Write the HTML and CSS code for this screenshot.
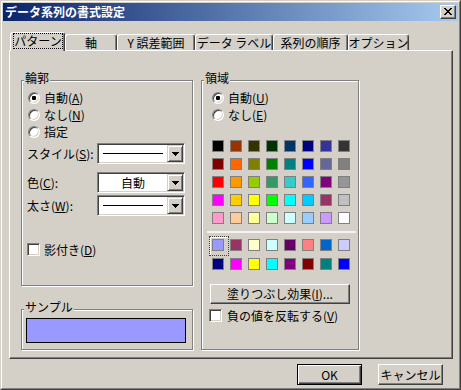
FILE: index.html
```html
<!DOCTYPE html>
<html lang="ja">
<head>
<meta charset="utf-8">
<title>データ系列の書式設定</title>
<link rel="stylesheet" href="styles.css">
</head>
<body>
<div class="window">
  <div class="frame">
    <div class="titlebar">
      <span class="title">データ系列の書式設定</span>
      <div class="close">
        <svg width="8" height="7" viewBox="0 0 8 7" shape-rendering="crispEdges"><path fill="#000" d="M0 0h2v1H0zM6 0h2v1H6zM1 1h2v1H1zM5 1h2v1H5zM2 2h4v1H2zM3 3h2v1H3zM2 4h4v1H2zM1 5h2v1H1zM5 5h2v1H5zM0 6h2v1H0zM6 6h2v1H6z"/></svg>
      </div>
    </div>
    <div class="body">
      <div class="tabs">
        <div class="tab active t1"><span class="focus">パターン</span></div>
        <div class="tab t2">軸</div>
        <div class="tab t3">Y 誤差範囲</div>
        <div class="tab t4">データ ラベル</div>
        <div class="tab t5">系列の順序</div>
        <div class="tab t6">オプション</div>
      </div>
      <div class="panel">
        <div class="col-left">
          <div class="group g-outline">
            <span class="legend">輪郭</span>
            <div class="radio-row"><span class="radio checked"></span><span>自動(<u>A</u>)</span></div>
            <div class="radio-row"><span class="radio"></span><span>なし(<u>N</u>)</span></div>
            <div class="radio-row"><span class="radio"></span><span>指定</span></div>
            <div class="field-row fr1">
              <span class="field-label">スタイル(<u>S</u>):</span>
              <div class="combo">
                <div class="combo-field"><span class="line"></span></div>
                <div class="combo-btn"><svg width="7" height="4" viewBox="0 0 7 4" shape-rendering="crispEdges"><path fill="#000" d="M0 0h7v1H0zM1 1h5v1H1zM2 2h3v1H2zM3 3h1v1H3z"/></svg></div>
              </div>
            </div>
            <div class="field-row fr2">
              <span class="field-label">色(<u>C</u>):</span>
              <div class="combo">
                <div class="combo-field">自動</div>
                <div class="combo-btn"><svg width="7" height="4" viewBox="0 0 7 4" shape-rendering="crispEdges"><path fill="#000" d="M0 0h7v1H0zM1 1h5v1H1zM2 2h3v1H2zM3 3h1v1H3z"/></svg></div>
              </div>
            </div>
            <div class="field-row fr3">
              <span class="field-label">太さ(<u>W</u>):</span>
              <div class="combo">
                <div class="combo-field"><span class="line"></span></div>
                <div class="combo-btn"><svg width="7" height="4" viewBox="0 0 7 4" shape-rendering="crispEdges"><path fill="#000" d="M0 0h7v1H0zM1 1h5v1H1zM2 2h3v1H2zM3 3h1v1H3z"/></svg></div>
              </div>
            </div>
            <div class="check-row cr-shadow"><span class="check"></span><span>影付き(<u>D</u>)</span></div>
          </div>
          <div class="group g-sample">
            <span class="legend">サンプル</span>
            <div class="sample-fill"></div>
          </div>
        </div>
        <div class="group g-area">
          <span class="legend">領域</span>
          <div class="radio-row"><span class="radio checked"></span><span>自動(<u>U</u>)</span></div>
          <div class="radio-row"><span class="radio"></span><span>なし(<u>E</u>)</span></div>
          <div class="palette">
            <span class="sw" style="background:#000000"></span>
            <span class="sw" style="background:#993300"></span>
            <span class="sw" style="background:#333300"></span>
            <span class="sw" style="background:#003300"></span>
            <span class="sw" style="background:#003366"></span>
            <span class="sw" style="background:#000080"></span>
            <span class="sw" style="background:#333399"></span>
            <span class="sw" style="background:#333333"></span>
            <span class="sw" style="background:#800000"></span>
            <span class="sw" style="background:#ff6600"></span>
            <span class="sw" style="background:#808000"></span>
            <span class="sw" style="background:#008000"></span>
            <span class="sw" style="background:#008080"></span>
            <span class="sw" style="background:#0000ff"></span>
            <span class="sw" style="background:#666699"></span>
            <span class="sw" style="background:#808080"></span>
            <span class="sw" style="background:#ff0000"></span>
            <span class="sw" style="background:#ff9900"></span>
            <span class="sw" style="background:#99cc00"></span>
            <span class="sw" style="background:#339966"></span>
            <span class="sw" style="background:#33cccc"></span>
            <span class="sw" style="background:#3366ff"></span>
            <span class="sw" style="background:#800080"></span>
            <span class="sw" style="background:#969696"></span>
            <span class="sw" style="background:#ff00ff"></span>
            <span class="sw" style="background:#ffcc00"></span>
            <span class="sw" style="background:#ffff00"></span>
            <span class="sw" style="background:#00ff00"></span>
            <span class="sw" style="background:#00ffff"></span>
            <span class="sw" style="background:#00ccff"></span>
            <span class="sw" style="background:#993366"></span>
            <span class="sw" style="background:#c0c0c0"></span>
            <span class="sw" style="background:#ff99cc"></span>
            <span class="sw" style="background:#ffcc99"></span>
            <span class="sw" style="background:#ffff99"></span>
            <span class="sw" style="background:#ccffcc"></span>
            <span class="sw" style="background:#ccffff"></span>
            <span class="sw" style="background:#99ccff"></span>
            <span class="sw" style="background:#cc99ff"></span>
            <span class="sw" style="background:#ffffff"></span>
          </div>
          <div class="sep"></div>
          <div class="palette palette2">
            <span class="sw sel" style="background:#9999ff"></span>
            <span class="sw" style="background:#993366"></span>
            <span class="sw" style="background:#ffffcc"></span>
            <span class="sw" style="background:#ccffff"></span>
            <span class="sw" style="background:#660066"></span>
            <span class="sw" style="background:#ff8080"></span>
            <span class="sw" style="background:#0066cc"></span>
            <span class="sw" style="background:#ccccff"></span>
            <span class="sw" style="background:#000080"></span>
            <span class="sw" style="background:#ff00ff"></span>
            <span class="sw" style="background:#ffff00"></span>
            <span class="sw" style="background:#00ffff"></span>
            <span class="sw" style="background:#800080"></span>
            <span class="sw" style="background:#800000"></span>
            <span class="sw" style="background:#008080"></span>
            <span class="sw" style="background:#0000ff"></span>
          </div>
          <div class="btn fill-btn">塗りつぶし効果(<u>I</u>)...</div>
          <div class="check-row cr-invert"><span class="check"></span><span>負の値を反転する(<u>V</u>)</span></div>
        </div>
      </div>
      <div class="buttons">
        <div class="btn default">OK</div>
        <div class="btn">キャンセル</div>
      </div>
    </div>
  </div>
</div>
</body>
</html>
```
FILE: styles.css
```css
* { box-sizing: border-box; }
html, body { margin: 0; padding: 0; }
body {
  background: #d4d0c8;
  font-family: "Noto Sans CJK JP", "Noto Sans", sans-serif;
  font-size: 12px;
  color: #000;
}
u { text-underline-offset: 1px; }

.window {
  width: 461px;
  height: 390px;
  border: 1px solid;
  border-color: #d4d0c8 #404040 #404040 #d4d0c8;
  background: #d4d0c8;
}
.frame {
  height: 100%;
  border: 1px solid;
  border-color: #fff #808080 #808080 #fff;
  padding: 1px;
  display: flex;
  flex-direction: column;
}
.titlebar {
  flex: none;
  height: 18px;
  display: flex;
  align-items: center;
  justify-content: space-between;
  padding: 0 2px;
  background: linear-gradient(to right, #0a246a, #a6caf0);
}
.title {
  color: #fff;
  font-weight: bold;
  line-height: 14px;
}
.close {
  width: 16px;
  height: 14px;
  border: 1px solid;
  border-color: #fff #404040 #404040 #fff;
  box-shadow: inset -1px -1px #808080;
  background: #d4d0c8;
  display: flex;
  align-items: center;
  justify-content: center;
}
.close svg { display: block; margin: 0 1px 1px 0; }

.body {
  flex: 1;
  padding: 11px 5px 0 6px;
  display: flex;
  flex-direction: column;
}

/* tabs */
.tabs {
  display: flex;
  align-items: flex-end;
  height: 18px;
  margin-left: 1px;
  position: relative;
  z-index: 2;
}
.tab {
  height: 16px;
  border: 1px solid;
  border-bottom: none;
  border-color: #fff #404040 transparent #fff;
  border-radius: 3px 3px 0 0;
  box-shadow: inset -1px 0 #808080;
  background: #d4d0c8;
  display: flex;
  align-items: center;
  justify-content: center;
  line-height: 14px;
  white-space: nowrap;
}
.tab.active {
  height: 19px;
  margin-bottom: -1px;
  align-items: flex-start;
}
.focus {
  flex: 1;
  height: 16px;
  margin: 0 1px 0 2px;
  border: 1px dotted #000;
  display: flex;
  align-items: center;
  justify-content: center;
}
.t1 { width: 55px; }
.t2 { width: 52px; }
.t3 { width: 78px; }
.t4 { width: 78px; }
.t5 { width: 75px; }
.t6 { width: 61px; }

/* panel */
.panel {
  flex: none;
  width: 444px;
  height: 309px;
  border: 1px solid;
  border-color: #fff #404040 #404040 #fff;
  box-shadow: inset -1px -1px #808080;
  padding: 29px 0 0 11px;
  display: flex;
  gap: 8px;
  align-items: flex-start;
}
.col-left {
  display: flex;
  flex-direction: column;
}
.group {
  position: relative;
  border: 1px solid #808080;
  box-shadow: inset 1px 1px 0 #fff, 1px 1px 0 #fff;
}
.legend {
  position: absolute;
  top: -10px;
  left: 2px;
  padding: 0 1px;
  background: #d4d0c8;
  line-height: 14px;
  white-space: nowrap;
}
.g-outline {
  width: 172px;
  height: 206px;
  padding: 11px 0 0 6px;
}
.g-sample {
  width: 172px;
  height: 41px;
  margin-top: 23px;
  padding: 8px 0 0 4px;
}
.sample-fill {
  width: 160px;
  height: 25px;
  border: 1px solid #000;
  background: #9999ff;
}
.g-area {
  width: 158px;
  height: 270px;
  padding: 11px 0 0 10px;
}

/* radios / checks */
.radio-row {
  display: flex;
  align-items: center;
  height: 12px;
  margin-bottom: 5px;
  line-height: 14px;
  white-space: nowrap;
}
.radio {
  flex: none;
  position: relative;
  width: 12px;
  height: 12px;
  margin-right: 4px;
  border-radius: 50%;
  border: 1px solid;
  border-color: #808080 #fff #fff #808080;
  box-shadow: inset 1px 1px #404040, inset -1px -1px #d4d0c8;
  background: #fff;
}
.radio.checked::after {
  content: "";
  position: absolute;
  left: 3px;
  top: 3px;
  width: 4px;
  height: 4px;
  border-radius: 1px;
  background: #000;
}
.check-row {
  display: flex;
  align-items: center;
  height: 13px;
  line-height: 14px;
  white-space: nowrap;
}
.check {
  flex: none;
  width: 13px;
  height: 13px;
  margin-right: 4px;
  border: 1px solid;
  border-color: #808080 #fff #fff #808080;
  box-shadow: inset 1px 1px #404040, inset -1px -1px #d4d0c8;
  background: #fff;
}
.cr-shadow { margin: 27px 0 0 -1px; }
.cr-invert { margin: 5px 0 0 -3px; }
.cr-invert .check { margin-right: 5px; }

/* combo fields */
.field-row {
  display: flex;
  align-items: center;
  height: 21px;
  margin-left: -1px;
  line-height: 14px;
  white-space: nowrap;
}
.fr1 { margin-top: 3px; }
.fr2 { margin-top: 8px; }
.fr3 { margin-top: 2px; }
.field-label { width: 70px; }
.combo {
  display: flex;
  width: 88px;
  height: 21px;
  padding: 1px;
  border: 1px solid;
  border-color: #808080 #fff #fff #808080;
  box-shadow: inset 1px 1px #404040, inset -1px -1px #d4d0c8;
  background: #fff;
}
.combo-field {
  flex: 1;
  display: flex;
  align-items: center;
  justify-content: center;
}
.line {
  width: 60px;
  height: 1px;
  background: #000;
}
.combo-btn {
  flex: none;
  width: 16px;
  height: 17px;
  border: 1px solid;
  border-color: #d4d0c8 #404040 #404040 #d4d0c8;
  box-shadow: inset 1px 1px #fff, inset -1px -1px #808080;
  background: #d4d0c8;
  display: flex;
  align-items: center;
  justify-content: center;
}
.combo-btn svg { display: block; margin: 0 0 0 0; }

/* palette */
.palette {
  display: grid;
  grid-template-columns: repeat(8, 12px);
  grid-auto-rows: 12px;
  column-gap: 6px;
  row-gap: 6px;
  margin-top: 19px;
}
.palette2 {
  margin-top: 6px;
  row-gap: 7px;
}
.sw {
  position: relative;
  width: 12px;
  height: 12px;
  border: 1px solid #808080;
}
.sw.sel::after {
  content: "";
  position: absolute;
  left: -4px;
  top: -4px;
  width: 18px;
  height: 18px;
  border: 1px dotted #404040;
  box-shadow: inset 1px 1px #fff;
}
.sep {
  margin: 7px 0 0 -5px;
  width: 149px;
  height: 2px;
  background: #f4f4f4;
}

/* buttons */
.btn {
  width: 65px;
  height: 21px;
  border: 1px solid;
  border-color: #fff #404040 #404040 #fff;
  box-shadow: inset -1px -1px #808080;
  background: #d4d0c8;
  display: flex;
  align-items: center;
  justify-content: center;
  line-height: 14px;
  white-space: nowrap;
}
.btn.default {
  border: 1px solid #000;
  box-shadow: inset 1px 1px #fff, inset -1px -1px #404040, inset -2px -2px #808080;
}
.fill-btn {
  width: 140px;
  height: 20px;
  margin: 14px 0 0 -2px;
}
.buttons {
  display: flex;
  justify-content: flex-end;
  gap: 16px;
  margin-top: 5px;
  padding-right: 10px;
}
```
